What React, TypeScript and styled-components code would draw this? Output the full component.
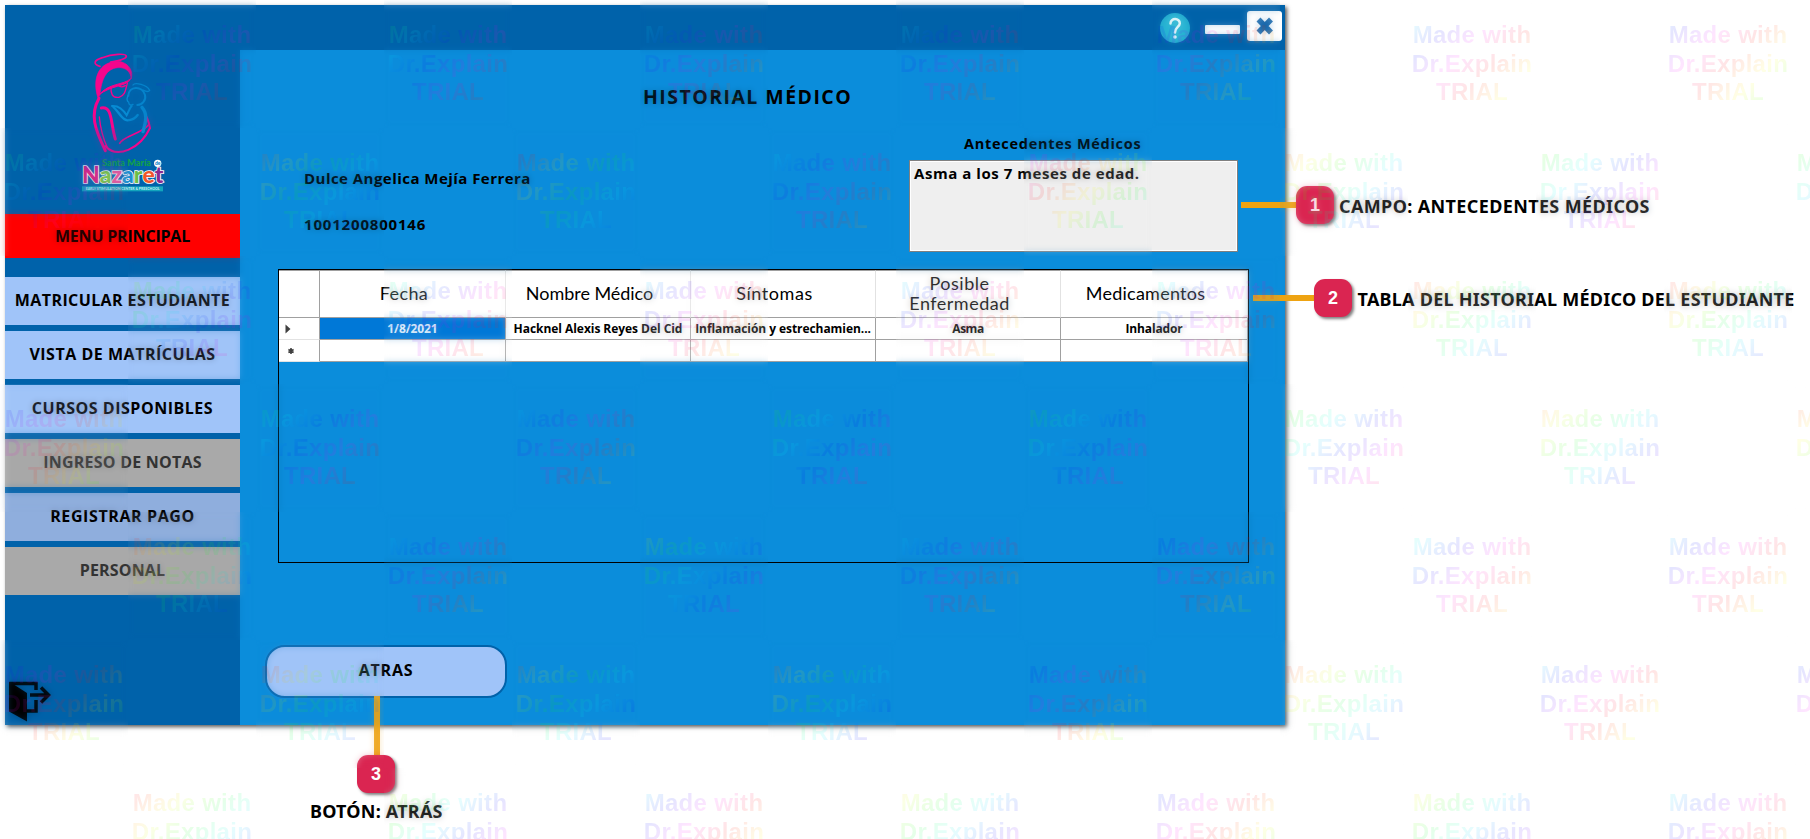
import React from 'react';
import styled, { createGlobalStyle, css } from 'styled-components';

const GlobalStyle = createGlobalStyle`
  *, *::before, *::after { box-sizing: border-box; }
  body { margin: 0; background: #fff; overflow: hidden; }
`;

const Page = styled.div`
  position: relative;
  width: 1810px;
  height: 839px;
  padding: 5px;
  overflow: hidden;
  background: #fff;
  color: #000;
  font-family: 'Open Sans', sans-serif;
  white-space: nowrap;
`;

const AppWindow = styled.div`
  display: flex;
  width: 1280px;
  height: 720px;
  background: #0b8ddb;
  box-shadow: 2px 2px 4px 0 rgba(0, 0, 0, 0.65);
`;

/* ---------- sidebar ---------- */

const Sidebar = styled.nav`
  display: flex;
  flex-direction: column;
  width: 235px;
  background: #0062aa;
`;

const LogoArea = styled.div`
  height: 209px;
  padding: 43px 0 0 69px;

  svg { display: block; }
`;

const MenuHeading = styled.div`
  height: 44px;
  margin-bottom: 19px;
  display: flex;
  align-items: center;
  justify-content: center;
  background: #f00;
  font-size: 16px;
  font-weight: 700;
  letter-spacing: -0.2px;
`;

const MenuList = styled.div`
  display: flex;
  flex-direction: column;
  gap: 6px;
  flex: 1;
`;

const tones = {
  light: css`background: #a0c4f9; color: #000;`,
  muted: css`background: #8faedd; color: #000;`,
  disabled: css`background: #a9a9a9; color: #333;`,
};

const MenuButton = styled.button<{ $tone: keyof typeof tones; $spacing: number }>`
  height: 48px;
  padding: 0 0 2px;
  border: 0;
  font: 700 16px 'Open Sans', sans-serif;
  letter-spacing: ${(p) => p.$spacing}px;
  ${(p) => tones[p.$tone]}
`;

const ExitButton = styled.button`
  align-self: flex-start;
  padding: 0 0 3px 3px;
  border: 0;
  background: none;

  svg { display: block; }
`;

/* ---------- main area ---------- */

const Main = styled.div`
  flex: 1;
  display: flex;
  flex-direction: column;
`;

const TitleBar = styled.header`
  display: flex;
  justify-content: flex-end;
  align-items: flex-start;
  height: 45px;
  padding: 6px 3px 0 0;
  background: #0062aa;
`;

const HelpIcon = styled.svg`
  margin: 2px 15px 0 0;
`;

const MinimizeButton = styled.div`
  width: 35px;
  height: 9px;
  margin: 14px 7px 0 0;
  border-radius: 1px;
  background: #fff;
`;

const CloseIcon = styled.svg`
  border-radius: 3px;
  background: #fff;
`;

const Title = styled.h1`
  margin: 34px 0 0 403px;
  font-size: 19.5px;
  line-height: 26px;
  font-weight: 700;
  letter-spacing: 1.45px;
`;

const Summary = styled.section`
  display: flex;
  justify-content: space-between;
  height: 159px;
  padding: 25px 47px 0 64px;
`;

const Student = styled.div`
  display: flex;
  flex-direction: column;
  gap: 26px;
  padding-top: 33px;
  font-size: 15px;
  line-height: 20px;
  font-weight: 700;
`;

const StudentLine = styled.div<{ $spacing: number }>`
  letter-spacing: ${(p) => p.$spacing}px;
`;

const History = styled.label`
  width: 329px;
  display: flex;
  flex-direction: column;
  font-weight: 700;
`;

const HistoryCaption = styled.span`
  padding: 0 0 7px 55px;
  font-size: 14.5px;
  line-height: 18px;
  letter-spacing: 0.72px;
`;

const HistoryField = styled.div`
  height: 92px;
  padding: 3px 4px;
  border: 1px solid #808080;
  box-shadow: inset 0 0 0 1px #fff;
  background: #efefef;
  font-size: 15px;
  line-height: 18px;
  letter-spacing: 0.55px;
`;

/* ---------- table ---------- */

const TableFrame = styled.div`
  width: 971px;
  height: 294px;
  margin: 0 0 82px 38px;
  border: 1px solid #000;
`;

const Table = styled.div`
  display: grid;
  grid-template-columns: 41px 186px 185px 185px 185px 187px;
  grid-template-rows: 48px 22px 22px;
`;

const Cell = styled.div<{ $selected?: boolean; $soft?: boolean; $spacing?: number }>`
  display: flex;
  align-items: center;
  justify-content: center;
  border: solid ${(p) => (p.$soft ? '#e2e2e2' : '#a0a0a0')};
  border-width: 0 1px 1px 0;
  background: ${(p) => (p.$selected ? '#0078d7' : '#fff')};
  color: ${(p) => (p.$selected ? '#fff' : '#000')};
  font-size: 12px;
  font-weight: 700;
  letter-spacing: ${(p) => p.$spacing ?? 0}px;
`;

const HeadCell = styled(Cell)`
  border-top: 1px solid #a0a0a0;
  border-bottom-color: #a0a0a0;
  padding: 0 17px 3px 0;
  font-family: Lato, sans-serif;
  font-size: 18px;
  line-height: 20px;
  font-weight: 400;
  text-align: center;
`;

const RowHead = styled(Cell)`
  justify-content: flex-start;
  padding-left: 6px;
  border-bottom-color: #e2e2e2;
`;

const BackButton = styled.button`
  width: 242px;
  height: 53px;
  margin-left: 25px;
  padding: 0 0 4px;
  border: 2px solid #0062aa;
  border-radius: 20px;
  background: #a0c4f9;
  font: 700 16px 'Open Sans', sans-serif;
  letter-spacing: 0.8px;
`;

/* ---------- callouts pinned over the window ---------- */

const Connector = styled.div<{ $x: number; $y: number; $w: number; $h: number }>`
  position: absolute;
  left: ${(p) => p.$x}px;
  top: ${(p) => p.$y}px;
  width: ${(p) => p.$w}px;
  height: ${(p) => p.$h}px;
  background: #eea312;
`;

const Badge = styled.div<{ $x: number; $y: number }>`
  position: absolute;
  left: ${(p) => p.$x}px;
  top: ${(p) => p.$y}px;
  width: 38px;
  height: 38px;
  border-radius: 11px;
  background: #da2551;
  box-shadow: 2px 2px 3px rgba(0, 0, 0, 0.5);
  color: #fff;
  font: 700 18px/38px 'Liberation Sans', Arial, sans-serif;
  text-align: center;
`;

const CalloutLabel = styled.div<{ $x: number; $y: number; $spacing: number }>`
  position: absolute;
  left: ${(p) => p.$x}px;
  top: ${(p) => p.$y}px;
  font: 700 18px/24px 'Noto Sans', sans-serif;
  letter-spacing: ${(p) => p.$spacing}px;
`;

/* ---------- trial watermark ---------- */

const Watermark = styled.div`
  position: absolute;
  inset: 0 auto auto 0;
  pointer-events: none;
`;

const MarkRow = styled.div<{ $shifted: boolean }>`
  display: flex;
  gap: 128px;
  padding-left: ${(p) => (p.$shifted ? 128 : 0)}px;
`;

const MarkTile = styled.div`
  flex: none;
  position: relative;
  width: 128px;
  height: 128px;

  &::before {
    content: '';
    position: absolute;
    inset: 0;
    backdrop-filter: blur(3px);
    opacity: 0.25;
  }
`;

const hueStops = (start: number) =>
  Array.from({ length: 13 }, (_, i) => `hsl(${start + i * 30} 100% 50%)`).join(', ');

const MarkText = styled.div<{ $hue: number }>`
  position: relative;
  height: 128px;
  padding-top: 21px;
  font: 700 24px/28.6px 'Liberation Sans', Arial, sans-serif;
  text-align: center;
  letter-spacing: 0.3px;
  color: transparent;
  background: linear-gradient(135deg, ${(p) => hueStops(p.$hue - 50)});
  background-clip: text;
  -webkit-background-clip: text;
  opacity: 0.1;
`;

const markHues = [
  [140, 145, 185, 180, 230, 200, 232],
  [140, 20, -10, 180, 290, 25, 110, 120],
  [90, 155, 195, 190, 170, 10, 5],
  [240, 140, 190, 110, 105, 105, 35, 20],
  [5, 190, 70, 185, 230, 175, 200],
  [235, 0, 20, 20, 230, 5, 200, 230],
  [0, 80, 200, 60, 230, 60, 185],
];

/* ---------- drawings ---------- */

const Logo = () => (
  <svg width="100" height="150" viewBox="0 0 300 450" fill="none" strokeLinecap="round">
    <g stroke="#f5058c">
      <path d="M78 55C55 48 60 37 85 29C115 18 156 15 157 25C156 34 130 39 110 42" strokeWidth="5" />
      <path d="M72 150C56 102 66 46 126 40C156 39 181 63 171 93C172 74 156 56 130 59C98 62 82 92 78 140Z" fill="#f5058c" strokeWidth="2" />
      <path d="M76 140C104 104 149 112 170 92C160 116 108 112 76 140Z" fill="#f5058c" strokeWidth="3" />
      <path d="M160 106C155 123 155 142 135 148C114 151 110 135 111 117M132 112C138 118 146 118 154 113" strokeWidth="4" />
      <path d="M75 151C48 200 61 240 94 308" strokeWidth="9" />
      <path d="M76 207C79 240 88 273 101 301" strokeWidth="4" />
      <path d="M82 180C116 174 109 224 124 273" strokeWidth="9" />
      <path d="M94 294C130 335 200 300 228 240C226 229 222 216 218 207" strokeWidth="6" />
      <path d="M137 286C150 262 200 259 224 230" strokeWidth="5" />
    </g>
    <g stroke="#078bd3">
      <path d="M177 111C183 101 219 111 227 127C223 133 213 130 207 126" strokeWidth="4" />
      <path d="M163 143C164 113 205 112 213 141C217 157 205 170 190 171" strokeWidth="6" />
      <path d="M163 142C156 153 158 158 164 163C164 171 171 173 177 169" strokeWidth="4" />
      <path d="M114 174C136 172 149 187 158 202C163 194 166 181 173 174" strokeWidth="6" />
      <path d="M118 177C137 194 143 216 160 217C177 216 184 211 191 201" strokeWidth="7" />
      <path d="M204 178C221 198 216 219 207 251" strokeWidth="10" />
    </g>
    <g fontFamily="Lato, sans-serif" fontWeight="900">
      <text x="84" y="355" fontSize="30" textLength="147" lengthAdjust="spacingAndGlyphs" fill="#12a04b">Santa María</text>
      <circle cx="251" cy="346" r="11" fill="#fff" />
      <text x="243" y="351" fontSize="15" fill="#0a84cc">de</text>
      <text x="24" y="404" fontSize="66" textLength="244" lengthAdjust="spacingAndGlyphs" stroke="#fff" strokeWidth="5" paintOrder="stroke">
        <tspan fill="#d81b80">N</tspan>
        <tspan fill="#7ac143">a</tspan>
        <tspan fill="#f04e98">z</tspan>
        <tspan fill="#1d8fd0">a</tspan>
        <tspan fill="#6dbe45">r</tspan>
        <tspan fill="#f0562a">e</tspan>
        <tspan fill="#8a2a90">t</tspan>
      </text>
    </g>
    <rect x="24" y="415" width="243" height="15" fill="#12a5bd" />
    <text x="35" y="427" fontSize="12" fontFamily="Lato, sans-serif" fontWeight="700" textLength="222" lengthAdjust="spacingAndGlyphs" fill="#c9eef4">EARLY STIMULATION CENTER &amp; PRESCHOOL</text>
  </svg>
);

const ExitIcon = () => (
  <svg width="44" height="41" viewBox="8 681 44 41" fill="none" stroke="#000" strokeWidth="3.5">
    <path d="M9 681.500L27 693V721.500L9 711.500Z" fill="#000" stroke="none" />
    <path d="M10 683.500H36V690M27 711H36V700" />
    <path d="M30 695H48M41 687.500L48.500 695L41 702.500" />
  </svg>
);

const menu: { label: string; tone: keyof typeof tones; spacing: number }[] = [
  { label: 'MATRICULAR ESTUDIANTE', tone: 'light', spacing: 0.4 },
  { label: 'VISTA DE MATRÍCULAS', tone: 'light', spacing: 0.52 },
  { label: 'CURSOS DISPONIBLES', tone: 'light', spacing: 0.52 },
  { label: 'INGRESO DE NOTAS', tone: 'disabled', spacing: 0.22 },
  { label: 'REGISTRAR PAGO', tone: 'muted', spacing: 0.6 },
  { label: 'PERSONAL', tone: 'disabled', spacing: 0.15 },
];

export default function App() {
  return (
    <Page>
      <GlobalStyle />
      <AppWindow>
        <Sidebar>
          <LogoArea><Logo /></LogoArea>
          <MenuHeading>MENU PRINCIPAL</MenuHeading>
          <MenuList>
            {menu.map((m) => (
              <MenuButton key={m.label} $tone={m.tone} $spacing={m.spacing}>{m.label}</MenuButton>
            ))}
          </MenuList>
          <ExitButton aria-label="Salir"><ExitIcon /></ExitButton>
        </Sidebar>

        <Main>
          <TitleBar>
            <HelpIcon width="30" height="30" viewBox="0 0 30 30" fill="none">
              <circle cx="15" cy="15" r="15" fill="#27b5d3" />
              <path d="M10.500 10.500C10.500 4.500 20 4.800 19.800 10.500C19.600 14 15 14 15 19.500" stroke="#fff" strokeWidth="2.500" strokeLinecap="round" />
              <circle cx="15" cy="24" r="1.800" fill="#fff" />
            </HelpIcon>
            <MinimizeButton />
            <CloseIcon width="35" height="30" viewBox="0 0 35 30">
              <path d="M11.500 8.500L24 21.500M24 8.500L11.500 21.500" stroke="#0f62a8" strokeWidth="5.500" />
            </CloseIcon>
          </TitleBar>

          <Title>HISTORIAL MÉDICO</Title>
          <Summary>
            <Student>
              <StudentLine $spacing={0.46}>Dulce Angelica Mejía Ferrera</StudentLine>
              <StudentLine $spacing={0.82}>1001200800146</StudentLine>
            </Student>
            <History>
              <HistoryCaption>Antecedentes Médicos</HistoryCaption>
              <HistoryField>Asma a los 7 meses de edad.</HistoryField>
            </History>
          </Summary>

          <TableFrame>
            <Table>
              <HeadCell />
              <HeadCell $soft $spacing={0.38}>Fecha</HeadCell>
              <HeadCell $soft $spacing={-0.04}>Nombre Médico</HeadCell>
              <HeadCell $soft $spacing={0.56}>Síntomas</HeadCell>
              <HeadCell $soft $spacing={0.5}>Posible<br />Enfermedad</HeadCell>
              <HeadCell $soft $spacing={0.25}>Medicamentos</HeadCell>

              <RowHead>
                <svg width="6" height="10" viewBox="0 0 6 10"><path d="M0.500 0.500L5.500 5L0.500 9.500Z" fill="#404040" /></svg>
              </RowHead>
              <Cell $selected $spacing={-0.1}>1/8/2021</Cell>
              <Cell $spacing={-0.05}>Hacknel Alexis Reyes Del Cid</Cell>
              <Cell $spacing={-0.06}>Inflamación y estrechamien...</Cell>
              <Cell $spacing={-0.5}>Asma</Cell>
              <Cell $spacing={-0.15}>Inhalador</Cell>

              <RowHead>
                <svg width="12" height="8" viewBox="-3 0 12 8"><path d="M3 1V7M0.400 2.500L5.600 5.500M5.600 2.500L0.400 5.500" stroke="#404040" strokeWidth="1.600" /></svg>
              </RowHead>
              <Cell /><Cell /><Cell /><Cell /><Cell />
            </Table>
          </TableFrame>

          <BackButton>ATRAS</BackButton>
        </Main>
      </AppWindow>

      <Connector $x={1241} $y={202} $w={58} $h={6} />
      <Badge $x={1296} $y={186}>1</Badge>
      <CalloutLabel $x={1339} $y={194} $spacing={0.37}>CAMPO: ANTECEDENTES MÉDICOS</CalloutLabel>

      <Connector $x={1253} $y={295} $w={64} $h={6} />
      <Badge $x={1314} $y={279}>2</Badge>
      <CalloutLabel $x={1357.5} $y={287} $spacing={0.25}>TABLA DEL HISTORIAL MÉDICO DEL ESTUDIANTE</CalloutLabel>

      <Connector $x={373.5} $y={696} $w={6} $h={62} />
      <Badge $x={357} $y={755}>3</Badge>
      <CalloutLabel $x={310} $y={799} $spacing={0.22}>BOTÓN: ATRÁS</CalloutLabel>

      <Watermark>
        {markHues.map((row, r) => (
          <MarkRow key={r} $shifted={r % 2 === 0}>
            {row.map((hue, i) => (
              <MarkTile key={i}>
                <MarkText $hue={hue}>
                  Made with<br />Dr.Explain<br />TRIAL
                </MarkText>
              </MarkTile>
            ))}
          </MarkRow>
        ))}
      </Watermark>
    </Page>
  );
}
